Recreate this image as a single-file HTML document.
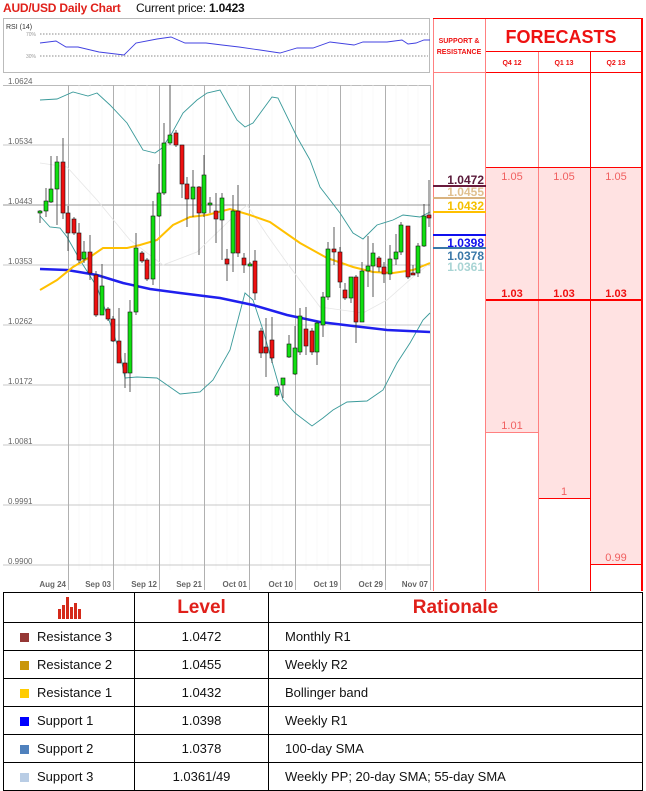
<!DOCTYPE html>
<html><head><meta charset="utf-8"><style>
*{margin:0;padding:0;box-sizing:border-box}
body{width:646px;height:790px;background:#fff;position:relative;overflow:hidden;font-family:"Liberation Sans",sans-serif}
.a{position:absolute}
table{border-collapse:collapse;position:absolute;left:3px;top:592px;width:640px}
td{border:1px solid #000;height:28px;font-size:13px;color:#111}
.sq{display:inline-block;width:9px;height:9px;margin:0 8px 0 16px;vertical-align:-1px}
</style></head><body>
<div class="a" style="left:3px;top:0;font-size:12px;font-weight:bold;color:#e0201a;line-height:16px;letter-spacing:-0.2px">AUD/USD Daily Chart</div>
<div class="a" style="left:136px;top:0;font-size:12px;color:#111;line-height:16px;letter-spacing:-0.2px">Current price: <b>1.0423</b></div>

<svg class="a" style="left:0;top:0" width="646" height="592">
<rect x="3.5" y="18.5" width="426" height="54" fill="#fff" stroke="#bbb"/>
<text x="6" y="29" font-size="7" font-family="Liberation Sans" fill="#333">RSI (14)</text>
<text x="26" y="36" font-size="5" font-family="Liberation Sans" fill="#999">70%</text>
<text x="26" y="58" font-size="5" font-family="Liberation Sans" fill="#999">30%</text>
<line x1="40" y1="34" x2="428" y2="34" stroke="#666" stroke-dasharray="1.5,1.5" stroke-width="0.7"/>
<line x1="40" y1="56" x2="428" y2="56" stroke="#666" stroke-dasharray="1.5,1.5" stroke-width="0.7"/>
<polyline fill="none" stroke="#4040e0" stroke-width="0.9" points="40,43 56,41 66,47 78,47 99,52 124,55 136,43 157,39 171,37 185,43 206,43 222,45 239,47 260,50 280,53 297,48 313,48 330,42 354,45 363,42 387,42 402,40 408,44 416,43 424,40 430,40"/>
<line x1="3" y1="85.5" x2="430" y2="85.5" stroke="#bbb"/>
<line x1="430.5" y1="85" x2="430.5" y2="590" stroke="#bbb"/>
<g stroke="#f5f5f5" stroke-width="0.6">
<line x1="79" y1="85" x2="79" y2="570"/><line x1="90" y1="85" x2="90" y2="570"/><line x1="102" y1="85" x2="102" y2="570"/>
<line x1="125" y1="85" x2="125" y2="570"/><line x1="136" y1="85" x2="136" y2="570"/><line x1="147" y1="85" x2="147" y2="570"/>
<line x1="170" y1="85" x2="170" y2="570"/><line x1="182" y1="85" x2="182" y2="570"/><line x1="193" y1="85" x2="193" y2="570"/>
<line x1="216" y1="85" x2="216" y2="570"/><line x1="227" y1="85" x2="227" y2="570"/><line x1="238" y1="85" x2="238" y2="570"/>
<line x1="261" y1="85" x2="261" y2="570"/><line x1="272" y1="85" x2="272" y2="570"/><line x1="283" y1="85" x2="283" y2="570"/>
<line x1="306" y1="85" x2="306" y2="570"/><line x1="317" y1="85" x2="317" y2="570"/><line x1="328" y1="85" x2="328" y2="570"/>
<line x1="351" y1="85" x2="351" y2="570"/><line x1="362" y1="85" x2="362" y2="570"/><line x1="373" y1="85" x2="373" y2="570"/>
<line x1="396" y1="85" x2="396" y2="570"/><line x1="408" y1="85" x2="408" y2="570"/><line x1="418" y1="85" x2="418" y2="570"/>
</g>
<g stroke="#c8c8c8" stroke-width="1">
<line x1="3" y1="145" x2="430" y2="145"/><line x1="3" y1="205" x2="430" y2="205" stroke="#999"/>
<line x1="3" y1="265" x2="430" y2="265"/><line x1="3" y1="325" x2="430" y2="325"/>
<line x1="3" y1="385" x2="430" y2="385"/><line x1="3" y1="445" x2="430" y2="445"/>
<line x1="3" y1="505" x2="430" y2="505"/><line x1="3" y1="565" x2="430" y2="565"/>
</g>
<g stroke="#b0b0b0" stroke-width="1">
<line x1="68.5" y1="85" x2="68.5" y2="590"/><line x1="113.5" y1="85" x2="113.5" y2="590"/>
<line x1="159.5" y1="85" x2="159.5" y2="590"/><line x1="204.5" y1="85" x2="204.5" y2="590"/>
<line x1="249.5" y1="85" x2="249.5" y2="590"/><line x1="295.5" y1="85" x2="295.5" y2="590"/>
<line x1="340.5" y1="85" x2="340.5" y2="590"/><line x1="385.5" y1="85" x2="385.5" y2="590"/>
</g>
<g font-size="8" font-family="Liberation Sans" fill="#666">
<text x="8" y="84">1.0624</text><text x="8" y="144">1.0534</text><text x="8" y="204">1.0443</text>
<text x="8" y="264">1.0353</text><text x="8" y="324">1.0262</text><text x="8" y="384">1.0172</text>
<text x="8" y="444">1.0081</text><text x="8" y="504">0.9991</text><text x="8" y="564">0.9900</text>
</g>
<g font-size="8" font-family="Liberation Sans" fill="#666" font-weight="bold" text-anchor="end">
<text x="66" y="587">Aug 24</text><text x="111" y="587">Sep 03</text><text x="157" y="587">Sep 12</text>
<text x="202" y="587">Sep 21</text><text x="247" y="587">Oct 01</text><text x="293" y="587">Oct 10</text>
<text x="338" y="587">Oct 19</text><text x="383" y="587">Oct 29</text><text x="428" y="587">Nov 07</text>
</g>
<polyline fill="none" stroke="#e6e6e6" stroke-width="0.8" points="40,163 67,167 97,200 130,240 163,265 197,252 230,220 247,205 267,235 287,263 320,307 363,313 387,300 413,277 430,263"/>
<polyline fill="none" stroke="#3a9a9a" stroke-width="0.9" points="40,100 57,99 73,92 88,96 97,93 110,105 127,123 143,150 155,153 162,148 172,133 183,113 197,100 207,93 220,90 237,120 245,127 253,123 272,97 278,98 297,137 310,160 320,187 330,200 340,213 353,233 363,239 377,225 393,220 403,215 420,217 430,212"/>
<polyline fill="none" stroke="#3a9a9a" stroke-width="0.9" points="40,216 50,227 60,228 67,237 80,260 97,287 110,323 120,353 125,378 137,377 157,378 180,394 200,392 213,380 230,350 245,293 253,300 263,330 283,400 295,413 312,426 323,418 333,410 347,402 367,401 383,390 397,363 410,343 423,320 430,313"/>
<polyline fill="none" stroke="#1f1fee" stroke-width="2.5" points="40,269 67,270 97,275 123,283 150,289 180,293 220,298 253,305 287,315 320,322 353,326 387,330 430,332"/>
<polyline fill="none" stroke="#ffc000" stroke-width="2" points="40,290 57,280 73,267 90,257 103,248 127,248 140,245 157,240 173,225 190,217 207,215 230,209 250,215 270,222 300,243 327,258 353,267 373,272 393,273 413,270 430,263"/>
<path fill="none" stroke="#333" stroke-width="0.8" d="M40 210V223M46 188V217M51 156V203M57 156V225M63 138V219M68 206V251M74 217V235M79 223V263M84 241V263M90 235V280M96 271V317M102 264V315M108 307V321M113 316V342M119 308V363M125 353V388M130 300V392M136 233V315M142 251V263M147 258V281M153 201V285M159 164V217M164 123V195M170 85V145M176 130V147M182 145V198M187 177V227M193 170V217M199 186V255M204 155V217M210 197V213M216 193V243M222 193V260M227 249V281M233 195V272M238 185V257M244 253V273M250 262V266M255 250V300M261 328V358M266 318V377M272 317V363M277 386V397M283 378V398M289 335V358M295 326V375M300 308V355M306 307V355M312 328V355M317 321V365M323 292V337M328 242V300M334 227V265M340 247V288M345 283V300M351 277V303M356 275V343M362 262V322M368 236V287M373 243V297M379 256V272M384 262V283M390 245V280M396 234V265M401 222V255M408 226V279M413 265V275M418 243V277M424 204V247M429 180V227"/>
<g stroke="#111" stroke-width="0.6" fill="#10e010">
<rect x="38" y="211" width="4" height="2"/><rect x="44" y="201" width="4" height="10"/><rect x="49" y="189" width="4" height="13"/><rect x="55" y="162" width="4" height="27"/>
<rect x="82" y="252" width="4" height="7"/><rect x="100" y="286" width="4" height="29"/><rect x="128" y="312" width="4" height="61"/><rect x="134" y="248" width="4" height="64"/>
<rect x="151" y="216" width="4" height="63"/><rect x="157" y="193" width="4" height="23"/><rect x="162" y="143" width="4" height="50"/><rect x="168" y="135" width="4" height="8"/>
<rect x="191" y="187" width="4" height="12"/><rect x="202" y="175" width="4" height="38"/><rect x="208" y="203" width="4" height="2"/><rect x="220" y="198" width="4" height="22"/>
<rect x="231" y="211" width="4" height="42"/><rect x="248" y="264" width="4" height="2"/><rect x="275" y="387" width="4" height="8"/><rect x="281" y="378" width="4" height="7"/>
<rect x="287" y="344" width="4" height="13"/><rect x="293" y="348" width="4" height="26"/><rect x="298" y="316" width="4" height="36"/><rect x="315" y="323" width="4" height="29"/>
<rect x="321" y="297" width="4" height="28"/><rect x="326" y="249" width="4" height="48"/><rect x="349" y="277" width="4" height="21"/><rect x="360" y="271" width="4" height="51"/>
<rect x="366" y="266" width="4" height="5"/><rect x="371" y="253" width="4" height="13"/><rect x="388" y="259" width="4" height="15"/><rect x="394" y="252" width="4" height="7"/>
<rect x="399" y="225" width="4" height="27"/><rect x="416" y="246" width="4" height="27"/><rect x="422" y="216" width="4" height="30"/>
</g>
<g stroke="#111" stroke-width="0.6" fill="#ee1010">
<rect x="61" y="162" width="4" height="51"/><rect x="66" y="213" width="4" height="20"/><rect x="72" y="219" width="4" height="14"/><rect x="77" y="233" width="4" height="27"/>
<rect x="88" y="252" width="4" height="21"/><rect x="94" y="275" width="4" height="40"/><rect x="106" y="309" width="4" height="10"/><rect x="111" y="319" width="4" height="22"/>
<rect x="117" y="341" width="4" height="22"/><rect x="123" y="363" width="4" height="10"/><rect x="140" y="253" width="4" height="8"/><rect x="145" y="260" width="4" height="19"/>
<rect x="174" y="133" width="4" height="12"/><rect x="180" y="145" width="4" height="39"/><rect x="185" y="184" width="4" height="15"/><rect x="197" y="187" width="4" height="26"/>
<rect x="214" y="211" width="4" height="8"/><rect x="225" y="259" width="4" height="5"/><rect x="236" y="211" width="4" height="42"/><rect x="242" y="258" width="4" height="7"/>
<rect x="253" y="261" width="4" height="32"/><rect x="259" y="331" width="4" height="22"/><rect x="264" y="347" width="4" height="6"/><rect x="270" y="340" width="4" height="18"/>
<rect x="304" y="329" width="4" height="17"/><rect x="310" y="331" width="4" height="21"/><rect x="332" y="249" width="4" height="3"/><rect x="338" y="252" width="4" height="30"/>
<rect x="343" y="290" width="4" height="8"/><rect x="354" y="277" width="4" height="45"/><rect x="377" y="258" width="4" height="9"/><rect x="382" y="267" width="4" height="7"/>
<rect x="406" y="226" width="4" height="51"/><rect x="411" y="273" width="4" height="2"/><rect x="427" y="215" width="4" height="3"/>
</g>
<rect x="486" y="167" width="52" height="265" fill="#ffe2e2"/>
<rect x="539" y="167" width="51" height="331" fill="#ffe2e2"/>
<rect x="591" y="167" width="51" height="397" fill="#ffe2e2"/>
<g stroke="#ff8080" stroke-width="1" fill="none">
<line x1="433.5" y1="18" x2="433.5" y2="591"/>
<line x1="485.5" y1="18" x2="485.5" y2="591"/>
<line x1="538.5" y1="52" x2="538.5" y2="591"/>
<line x1="433" y1="72.5" x2="486" y2="72.5"/>
<line x1="486" y1="432.5" x2="538" y2="432.5"/>
</g>
<g stroke="#ff0000" stroke-width="1" fill="none">
<line x1="433" y1="18.5" x2="643" y2="18.5"/>
<line x1="486" y1="51.5" x2="643" y2="51.5"/>
<line x1="486" y1="72.5" x2="643" y2="72.5"/>
<line x1="486" y1="167.5" x2="643" y2="167.5"/>
<line x1="590.5" y1="52" x2="590.5" y2="591"/>
<line x1="539" y1="498.5" x2="590" y2="498.5"/>
<line x1="591" y1="564.5" x2="643" y2="564.5"/>
</g>
<line x1="486" y1="300" x2="643" y2="300" stroke="#ff0000" stroke-width="2"/>
<line x1="642" y1="18" x2="642" y2="591" stroke="#ff0000" stroke-width="2"/>
<g font-family="Liberation Sans" font-weight="bold" fill="#ee1111">
<text x="459" y="43" font-size="7" text-anchor="middle">SUPPORT &amp;</text>
<text x="459" y="54" font-size="7" text-anchor="middle">RESISTANCE</text>
<text x="561" y="43" font-size="18" text-anchor="middle">FORECASTS</text>
<text x="512" y="65" font-size="7" text-anchor="middle">Q4 12</text>
<text x="564" y="65" font-size="7" text-anchor="middle">Q1 13</text>
<text x="616" y="65" font-size="7" text-anchor="middle">Q2 13</text>
<text x="512" y="297" font-size="11" text-anchor="middle">1.03</text>
<text x="564" y="297" font-size="11" text-anchor="middle">1.03</text>
<text x="616" y="297" font-size="11" text-anchor="middle">1.03</text>
</g>
<g font-family="Liberation Sans" font-size="11" fill="#f06060" text-anchor="middle">
<text x="512" y="180">1.05</text><text x="564" y="180">1.05</text><text x="616" y="180">1.05</text>
<text x="512" y="429">1.01</text><text x="564" y="495">1</text><text x="616" y="561">0.99</text>
</g>
<line x1="433" y1="186" x2="486" y2="186" stroke="#6a1a3c" stroke-width="2"/>
<line x1="433" y1="198" x2="486" y2="198" stroke="#d9b380" stroke-width="2"/>
<line x1="433" y1="212" x2="486" y2="212" stroke="#ffc000" stroke-width="2"/>
<line x1="433" y1="235" x2="486" y2="235" stroke="#1010ee" stroke-width="2"/>
<line x1="433" y1="248" x2="486" y2="248" stroke="#3a78a8" stroke-width="2"/>
<g font-family="Liberation Sans" font-size="12" font-weight="bold" text-anchor="end">
<text x="484" y="184" fill="#5a1a3a">1.0472</text>
<text x="484" y="196" fill="#e0c090">1.0455</text>
<text x="484" y="210" fill="#f5c000">1.0432</text>
<text x="484" y="247" fill="#1010ee">1.0398</text>
<text x="484" y="260" fill="#3a78a8">1.0378</text>
<text x="484" y="271" fill="#a8d4d4">1.0361</text>
</g>
</svg>

<table>
<tr style="height:30px"><td style="width:131px;text-align:center">
<svg width="26" height="22" style="vertical-align:middle"><g fill="#d42a1a"><rect x="2" y="12" width="3" height="10"/><rect x="6" y="8" width="3" height="14"/><rect x="10" y="0" width="3" height="22"/><rect x="14" y="10" width="3" height="12"/><rect x="18" y="6" width="3" height="16"/><rect x="22" y="12" width="3" height="10"/></g></svg></td>
<td style="width:134px;text-align:center;font-size:19px;font-weight:bold;color:#e0201a">Level</td>
<td style="text-align:center;font-size:19px;font-weight:bold;color:#e0201a">Rationale</td></tr>
<tr><td><span class="sq" style="background:#953735"></span>Resistance 3</td><td style="text-align:center">1.0472</td><td style="padding-left:16px">Monthly R1</td></tr>
<tr><td><span class="sq" style="background:#c9960a"></span>Resistance 2</td><td style="text-align:center">1.0455</td><td style="padding-left:16px">Weekly R2</td></tr>
<tr><td><span class="sq" style="background:#ffcc00"></span>Resistance 1</td><td style="text-align:center">1.0432</td><td style="padding-left:16px">Bollinger band</td></tr>
<tr><td><span class="sq" style="background:#0000ff"></span>Support 1</td><td style="text-align:center">1.0398</td><td style="padding-left:16px">Weekly R1</td></tr>
<tr><td><span class="sq" style="background:#4f81bd"></span>Support 2</td><td style="text-align:center">1.0378</td><td style="padding-left:16px">100-day SMA</td></tr>
<tr><td><span class="sq" style="background:#b9cde5"></span>Support 3</td><td style="text-align:center">1.0361/49</td><td style="padding-left:16px">Weekly PP; 20-day SMA; 55-day SMA</td></tr>
</table>
</body></html>
